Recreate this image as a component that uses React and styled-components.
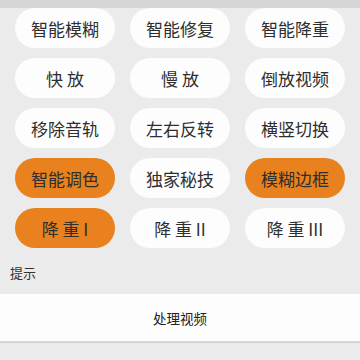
import React from 'react';
import styled, { createGlobalStyle } from 'styled-components';

const GlobalStyle = createGlobalStyle`
  body {
    margin: 0;
    background: #ebebeb;
    font-family: "Noto Sans CJK SC", "Noto Sans", sans-serif;
  }
`;

const Screen = styled.div`
  width: 360px;
  height: 360px;
  display: flex;
  flex-direction: column;
  background: #ebebeb;
  overflow: hidden;
`;

const TopStrip = styled.div`
  height: 8px;
  background: #d6d6d6;
`;

const Grid = styled.div`
  display: grid;
  grid-template-columns: repeat(3, 100px);
  column-gap: 15px;
  row-gap: 10px;
  padding: 0 15px;
`;

const Chip = styled.div`
  height: 40px;
  border-radius: 20px;
  display: flex;
  align-items: center;
  justify-content: center;
  font-size: 17px;
  color: #2e2e2e;
  white-space: pre;
  background: ${(p) => (p.$active ? '#e8811e' : '#fdfdfd')};
`;

const Hint = styled.div`
  padding: 0 10px;
  margin-top: 15px;
  height: 20px;
  line-height: 20px;
  font-size: 13px;
  color: #333;
`;

const ActionBar = styled.div`
  margin-top: 11px;
  height: 47px;
  background: #fdfdfd;
  display: flex;
  align-items: center;
  justify-content: center;
  font-size: 13.5px;
  font-weight: 400;
  color: #222;
  box-shadow: 0 2px 1px #d6d6d6;
`;

const items = [
  ['智能模糊'],
  ['智能修复'],
  ['智能降重'],
  ['快 放'],
  ['慢 放'],
  ['倒放视频'],
  ['移除音轨'],
  ['左右反转'],
  ['横竖切换'],
  ['智能调色', true],
  ['独家秘技'],
  ['模糊边框', true],
  ['降 重 I', true],
  ['降 重 II'],
  ['降 重 III'],
];

export default function App() {
  return (
    <Screen>
      <GlobalStyle />
      <TopStrip />
      <Grid>
        {items.map(([label, active]) => (
          <Chip key={label} $active={active}>
            {label}
          </Chip>
        ))}
      </Grid>
      <Hint>提示</Hint>
      <ActionBar>处理视频</ActionBar>
    </Screen>
  );
}
